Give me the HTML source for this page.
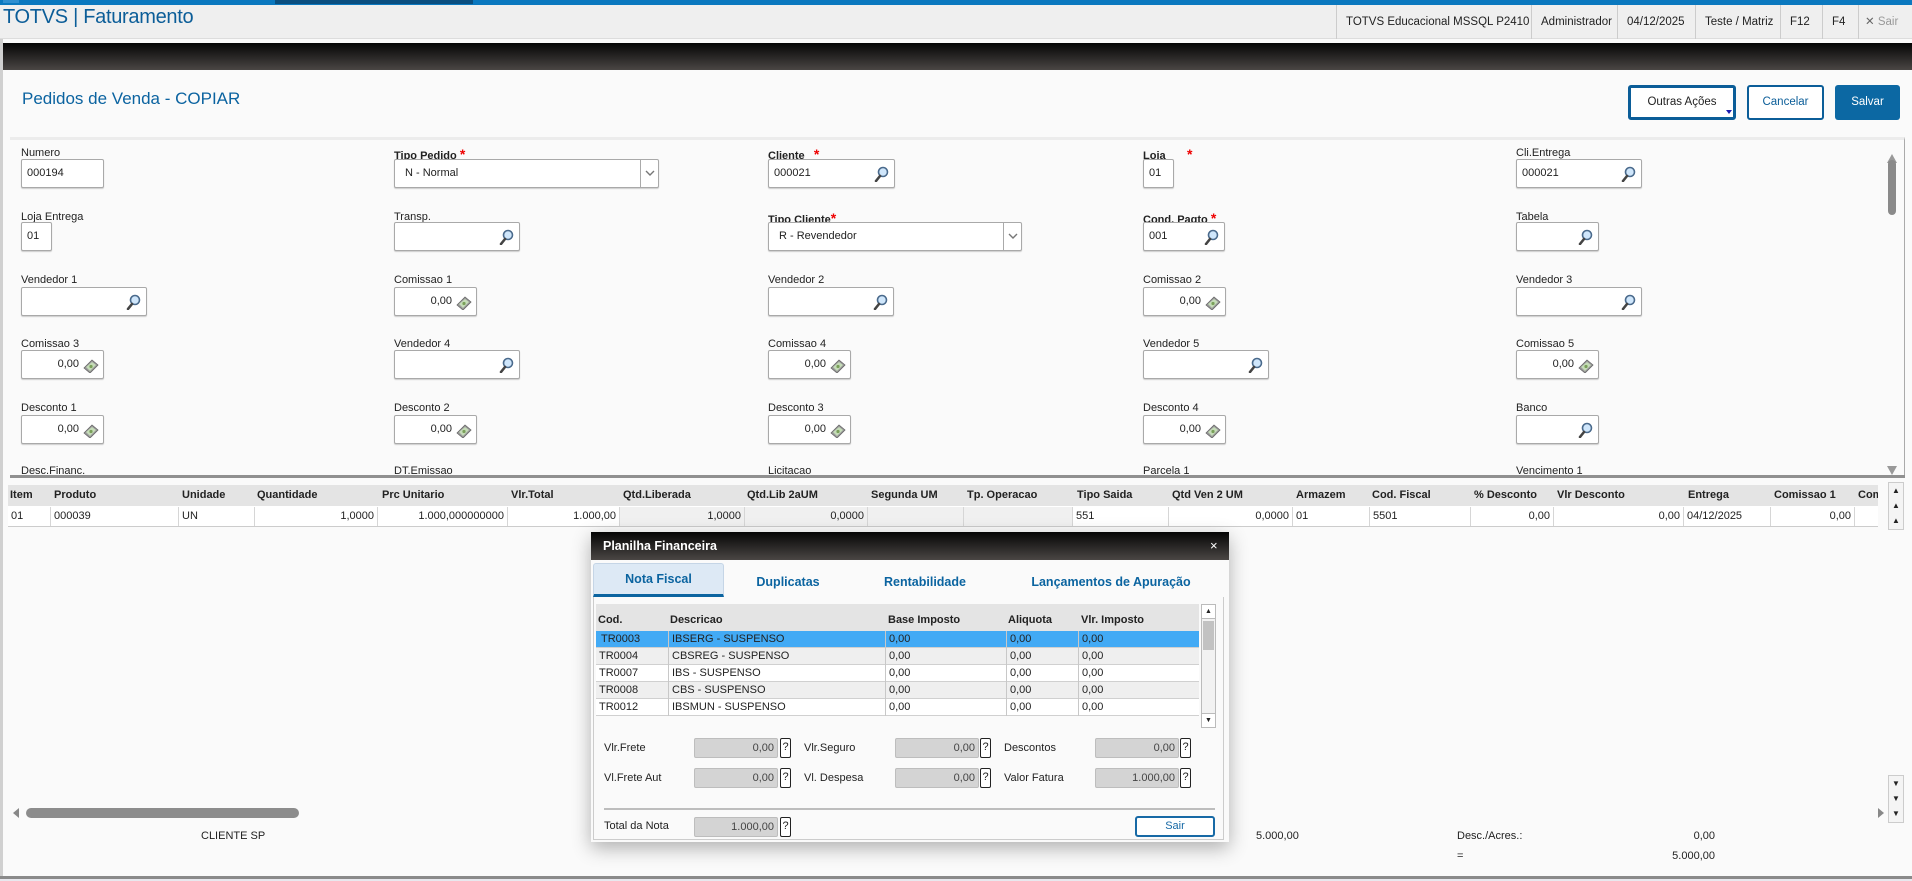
<!DOCTYPE html>
<html><head><meta charset="utf-8">
<style>
*{box-sizing:border-box;margin:0;padding:0}
body{width:1912px;height:881px;overflow:hidden;background:#fafafa;font-family:"Liberation Sans",Arial,sans-serif;color:#222;position:relative}
.a{position:absolute}
.lbl{position:absolute;font-size:11px;color:#222;white-space:nowrap}
.lbl b{font-weight:bold}
.req{color:#e00;font-weight:bold;font-size:14px}
.inp{position:absolute;height:29px;border:1px solid #a9a9a9;border-radius:2px;background:#fff;font-size:11px;line-height:27px;padding-left:5px;box-shadow:0 1px 1px #ccc}
.inp.r{text-align:right;padding-right:24px}
.ic{position:absolute;right:4px;top:6px}
.hd{position:absolute;top:0;height:34px;line-height:34px;font-size:11.5px;color:#222;border-left:1px solid #ccc;padding:0 9px;white-space:nowrap}
.gh{position:absolute;top:485px;height:21px;line-height:21px;font-size:11px;font-weight:bold;white-space:nowrap}
.gc{position:absolute;top:507px;height:19px;line-height:19px;font-size:11px;border-right:1px solid #d6d6d6;padding:0 3px;white-space:nowrap;overflow:hidden}
.dr{position:absolute;left:596px;width:603px;height:17px;font-size:11px;line-height:17px;border-bottom:1px solid #d0d0d0}
.dr span{position:absolute;top:0;padding-left:3px;border-left:1px solid #c8c8c8;height:17px}
.fl{position:absolute;font-size:11px;color:#222}
.fi{position:absolute;width:84px;height:20px;background:#d4d4d4;border:1px solid #bdbdbd;border-radius:2px;font-size:11px;line-height:18px;text-align:right;padding-right:3px;color:#444}
.q{position:absolute;width:11px;height:20px;border:1.5px solid #222;border-radius:2px;font-size:11px;line-height:17px;text-align:center;background:#fff}
.dd{position:absolute;right:0;top:0;width:18px;height:27px;border-left:1px solid #aaa}
</style></head><body>
<div class="a" style="left:0;top:0;width:1912px;height:5px;background:#0a78bf"></div>
<div class="a" style="left:3px;top:0;width:16px;height:3px;background:#2f8fd0"></div>
<div class="a" style="left:275px;top:0;width:198px;height:4px;background:#0a4f80"></div>
<div class="a" style="left:0;top:5px;width:1912px;height:34px;background:#efefef;border-bottom:1px solid #ddd"></div>
<div class="a" style="left:3px;top:6px;font-size:20px;color:#0b5d98;letter-spacing:-0.3px">TOTVS | Faturamento</div>
<div class="a" style="left:0;top:5px;width:1912px;height:34px">
<div class="hd" style="left:1336px">TOTVS Educacional MSSQL P2410</div>
<div class="hd" style="left:1531px">Administrador</div>
<div class="hd" style="left:1617px">04/12/2025</div>
<div class="hd" style="left:1695px">Teste / Matriz</div>
<div class="hd" style="left:1780px">F12</div>
<div class="hd" style="left:1822px">F4</div>
<div class="hd" style="left:1858px;color:#999;padding:0 6px"><span style="color:#666">✕</span> Sair</div>
</div>
<div class="a" style="left:2px;top:43px;width:1910px;height:27px;background:linear-gradient(#050505,#4a4644)"></div>
<div class="a" style="left:0;top:39px;width:3px;height:842px;background:#d0d0d0"></div>
<div class="a" style="left:22px;top:89px;font-size:17px;color:#0b63a0">Pedidos de Venda - COPIAR</div>
<div class="a" style="left:1628px;top:85px;width:108px;height:35px;border:3px solid #0b5d98;border-radius:3px;background:#fff;font-size:11.5px;text-align:center;line-height:29px;color:#222">Outras Ações</div>
<div class="a" style="left:1726px;top:110px;width:0;height:0;border-left:3px solid transparent;border-right:3px solid transparent;border-top:4px solid #1a1ab0"></div>
<div class="a" style="left:1747px;top:85px;width:77px;height:35px;border:2px solid #0b5d98;border-radius:3px;background:#fff;font-size:11.5px;text-align:center;line-height:31px;color:#0b5d98">Cancelar</div>
<div class="a" style="left:1835px;top:85px;width:65px;height:35px;border-radius:3px;background:#0c68a3;font-size:11.5px;text-align:center;line-height:35px;color:#fff">Salvar</div>
<div class="a" style="left:10px;top:137px;width:1895px;height:341px;border-top:3px solid #ececec;border-right:1px solid #aaa;border-bottom:3px solid #909090;overflow:hidden;background:#fafafa">
<div class="a" style="left:1877px;top:14px;width:0;height:0;border-left:5px solid transparent;border-right:5px solid transparent;border-bottom:9px solid #999"></div>
<div class="a" style="left:1878px;top:20px;width:8px;height:55px;border-radius:4px;background:#8a8a8a"></div>
<div class="a" style="left:1877px;top:326px;width:0;height:0;border-left:5px solid transparent;border-right:5px solid transparent;border-top:9px solid #999"></div>
</div>
<svg width="0" height="0" style="position:absolute"><defs>
<g id="mag"><circle cx="9" cy="6" r="4.5" fill="#cfe6fb" stroke="#4a6a8c" stroke-width="1.6"/><line x1="6" y1="10" x2="2" y2="15" stroke="#444" stroke-width="2.6" stroke-linecap="round"/></g>
<g id="mon"><path d="M1 11 L9 3 L15 8 L7 16 Z" fill="#9a9a9a" stroke="#666" stroke-width="0.8"/><path d="M3 10 L9 5 L13 8 L7 14 Z" fill="#c5dcb8"/><circle cx="8" cy="9.5" r="1.6" fill="#7aa05a"/></g>
<g id="chev"><path d="M5 11 L9 15 L13 11" fill="none" stroke="#777" stroke-width="1.4"/></g>
</defs></svg>
<div class="lbl" style="left:21px;top:147px">Numero</div>
<div class="inp" style="left:21px;top:159px;width:83px">000194</div>
<div class="lbl" style="left:394px;top:146px"><b>Tipo Pedido</b> <span class="req">*</span></div>
<div class="inp" style="left:394px;top:159px;width:265px;padding-left:10px">N - Normal<div class="dd"><svg width="18" height="27"><use href="#chev"/></svg></div></div>
<div class="lbl" style="left:768px;top:146px"><b>Cliente</b> &nbsp;&nbsp;<span class="req">*</span></div>
<div class="inp" style="left:768px;top:159px;width:127px">000021<svg class="ic" width="16" height="16"><use href="#mag"/></svg></div>
<div class="lbl" style="left:1143px;top:146px"><b>Loja</b> &nbsp;&nbsp;&nbsp;&nbsp;&nbsp;&nbsp;<span class="req">*</span></div>
<div class="inp" style="left:1143px;top:159px;width:31px">01</div>
<div class="lbl" style="left:1516px;top:147px">Cli.Entrega</div>
<div class="inp" style="left:1516px;top:159px;width:126px">000021<svg class="ic" width="16" height="16"><use href="#mag"/></svg></div>
<div class="lbl" style="left:21px;top:211px">Loja Entrega</div>
<div class="inp" style="left:21px;top:222px;width:31px">01</div>
<div class="lbl" style="left:394px;top:211px">Transp.</div>
<div class="inp" style="left:394px;top:222px;width:126px"><svg class="ic" width="16" height="16"><use href="#mag"/></svg></div>
<div class="lbl" style="left:768px;top:210px"><b>Tipo Cliente</b><span class="req">*</span></div>
<div class="inp" style="left:768px;top:222px;width:254px;padding-left:10px">R - Revendedor<div class="dd"><svg width="18" height="27"><use href="#chev"/></svg></div></div>
<div class="lbl" style="left:1143px;top:210px"><b>Cond. Pagto</b> <span class="req">*</span></div>
<div class="inp" style="left:1143px;top:222px;width:82px">001<svg class="ic" width="16" height="16"><use href="#mag"/></svg></div>
<div class="lbl" style="left:1516px;top:211px">Tabela</div>
<div class="inp" style="left:1516px;top:222px;width:83px"><svg class="ic" width="16" height="16"><use href="#mag"/></svg></div>
<div class="lbl" style="left:21px;top:274px">Vendedor 1</div>
<div class="inp" style="left:21px;top:287px;width:126px"><svg class="ic" width="16" height="16"><use href="#mag"/></svg></div>
<div class="lbl" style="left:394px;top:274px">Comissao 1</div>
<div class="inp r" style="left:394px;top:287px;width:83px">0,00<svg class="ic" width="16" height="16"><use href="#mon"/></svg></div>
<div class="lbl" style="left:768px;top:274px">Vendedor 2</div>
<div class="inp" style="left:768px;top:287px;width:126px"><svg class="ic" width="16" height="16"><use href="#mag"/></svg></div>
<div class="lbl" style="left:1143px;top:274px">Comissao 2</div>
<div class="inp r" style="left:1143px;top:287px;width:83px">0,00<svg class="ic" width="16" height="16"><use href="#mon"/></svg></div>
<div class="lbl" style="left:1516px;top:274px">Vendedor 3</div>
<div class="inp" style="left:1516px;top:287px;width:126px"><svg class="ic" width="16" height="16"><use href="#mag"/></svg></div>
<div class="lbl" style="left:21px;top:338px">Comissao 3</div>
<div class="inp r" style="left:21px;top:350px;width:83px">0,00<svg class="ic" width="16" height="16"><use href="#mon"/></svg></div>
<div class="lbl" style="left:394px;top:338px">Vendedor 4</div>
<div class="inp" style="left:394px;top:350px;width:126px"><svg class="ic" width="16" height="16"><use href="#mag"/></svg></div>
<div class="lbl" style="left:768px;top:338px">Comissao 4</div>
<div class="inp r" style="left:768px;top:350px;width:83px">0,00<svg class="ic" width="16" height="16"><use href="#mon"/></svg></div>
<div class="lbl" style="left:1143px;top:338px">Vendedor 5</div>
<div class="inp" style="left:1143px;top:350px;width:126px"><svg class="ic" width="16" height="16"><use href="#mag"/></svg></div>
<div class="lbl" style="left:1516px;top:338px">Comissao 5</div>
<div class="inp r" style="left:1516px;top:350px;width:83px">0,00<svg class="ic" width="16" height="16"><use href="#mon"/></svg></div>
<div class="lbl" style="left:21px;top:402px">Desconto 1</div>
<div class="inp r" style="left:21px;top:415px;width:83px">0,00<svg class="ic" width="16" height="16"><use href="#mon"/></svg></div>
<div class="lbl" style="left:394px;top:402px">Desconto 2</div>
<div class="inp r" style="left:394px;top:415px;width:83px">0,00<svg class="ic" width="16" height="16"><use href="#mon"/></svg></div>
<div class="lbl" style="left:768px;top:402px">Desconto 3</div>
<div class="inp r" style="left:768px;top:415px;width:83px">0,00<svg class="ic" width="16" height="16"><use href="#mon"/></svg></div>
<div class="lbl" style="left:1143px;top:402px">Desconto 4</div>
<div class="inp r" style="left:1143px;top:415px;width:83px">0,00<svg class="ic" width="16" height="16"><use href="#mon"/></svg></div>
<div class="lbl" style="left:1516px;top:402px">Banco</div>
<div class="inp" style="left:1516px;top:415px;width:83px"><svg class="ic" width="16" height="16"><use href="#mag"/></svg></div>
<div class="a" style="left:0;top:465px;width:1890px;height:10px;overflow:hidden">
<div class="lbl" style="left:21px;top:0">Desc.Financ.</div>
<div class="lbl" style="left:394px;top:0">DT.Emissao</div>
<div class="lbl" style="left:768px;top:0">Licitacao</div>
<div class="lbl" style="left:1143px;top:0">Parcela 1</div>
<div class="lbl" style="left:1516px;top:0">Vencimento 1</div>
</div>
<div class="a" style="left:10px;top:475px;width:1895px;height:3px;background:#909090"></div>
<div class="a" style="left:8px;top:485px;width:1870px;height:21px;background:#e4e4e4"></div>
<div class="gh" style="left:10px">Item</div><div class="gh" style="left:54px">Produto</div><div class="gh" style="left:182px">Unidade</div><div class="gh" style="left:257px">Quantidade</div><div class="gh" style="left:382px">Prc Unitario</div><div class="gh" style="left:511px">Vlr.Total</div><div class="gh" style="left:623px">Qtd.Liberada</div><div class="gh" style="left:747px">Qtd.Lib 2aUM</div><div class="gh" style="left:871px">Segunda UM</div><div class="gh" style="left:967px">Tp. Operacao</div><div class="gh" style="left:1077px">Tipo Saida</div><div class="gh" style="left:1172px">Qtd Ven 2 UM</div><div class="gh" style="left:1296px">Armazem</div><div class="gh" style="left:1372px">Cod. Fiscal</div><div class="gh" style="left:1474px">% Desconto</div><div class="gh" style="left:1557px">Vlr Desconto</div><div class="gh" style="left:1688px">Entrega</div><div class="gh" style="left:1774px">Comissao 1</div><div class="gh" style="left:1858px;width:20px;overflow:hidden">Comissao</div>
<div class="a" style="left:8px;top:506px;width:1870px;height:21px;background:#fff;border-bottom:1px solid #ccc"></div>
<div class="gc" style="left:8px;width:43px">01</div>
<div class="gc" style="left:51px;width:128px">000039</div>
<div class="gc" style="left:179px;width:76px">UN</div>
<div class="gc" style="left:255px;width:123px;text-align:right">1,0000</div>
<div class="gc" style="left:378px;width:130px;text-align:right">1.000,000000000</div>
<div class="gc" style="left:508px;width:112px;text-align:right">1.000,00</div>
<div class="gc" style="left:620px;width:125px;text-align:right;background:#f0f0f0">1,0000</div>
<div class="gc" style="left:745px;width:123px;text-align:right;background:#f0f0f0">0,0000</div>
<div class="gc" style="left:868px;width:96px;background:#f0f0f0"></div>
<div class="gc" style="left:964px;width:109px;background:#f0f0f0"></div>
<div class="gc" style="left:1073px;width:96px">551</div>
<div class="gc" style="left:1169px;width:124px;text-align:right">0,0000</div>
<div class="gc" style="left:1293px;width:77px">01</div>
<div class="gc" style="left:1370px;width:101px">5501</div>
<div class="gc" style="left:1471px;width:83px;text-align:right">0,00</div>
<div class="gc" style="left:1554px;width:130px;text-align:right">0,00</div>
<div class="gc" style="left:1684px;width:87px">04/12/2025</div>
<div class="gc" style="left:1771px;width:84px;text-align:right">0,00</div>
<div class="a" style="left:1888px;top:482px;width:16px;height:48px;border:1px solid #ccc;background:#f4f4f4;font-size:8px;text-align:center;line-height:15px">&#9650;<br>&#9650;<br>&#9650;</div>
<div class="a" style="left:1888px;top:775px;width:16px;height:48px;border:1px solid #ccc;background:#f4f4f4;font-size:8px;text-align:center;line-height:15px">&#9660;<br>&#9660;<br>&#9660;</div>
<div class="a" style="left:13px;top:808px;width:0;height:0;border-top:5px solid transparent;border-bottom:5px solid transparent;border-right:6px solid #888"></div>
<div class="a" style="left:26px;top:808px;width:273px;height:10px;border-radius:5px;background:#8c8c8c"></div>
<div class="a" style="left:1878px;top:808px;width:0;height:0;border-top:5px solid transparent;border-bottom:5px solid transparent;border-left:6px solid #888"></div>
<div class="lbl" style="left:201px;top:830px">CLIENTE SP</div>
<div class="lbl" style="left:1256px;top:830px">5.000,00</div>
<div class="lbl" style="left:1457px;top:830px">Desc./Acres.:</div>
<div class="lbl" style="left:1675px;top:830px;width:40px;text-align:right">0,00</div>
<div class="lbl" style="left:1457px;top:850px">=</div>
<div class="lbl" style="left:1655px;top:850px;width:60px;text-align:right">5.000,00</div>
<div class="a" style="left:0;top:876px;width:1912px;height:3px;background:#8a8a8a"></div>
<div class="a" style="left:0;top:879px;width:1912px;height:2px;background:#e8e8ee"></div>
<div class="a" style="left:591px;top:532px;width:638px;height:310px;background:#fafafa;box-shadow:0 6px 18px rgba(0,0,0,0.3)">
<div class="a" style="left:0;top:0;width:638px;height:28px;background:linear-gradient(#050505,#4a4644)"></div>
<div class="a" style="left:12px;top:7px;font-size:12.5px;font-weight:bold;color:#fff">Planilha Financeira</div>
<div class="a" style="left:619px;top:6px;font-size:13px;color:#fff">×</div>
<div class="a" style="left:2px;top:31px;width:131px;height:34px;background:#dde9f5;border:1px solid #c5d5e6;border-bottom:3px solid #0b64a0;border-radius:3px 3px 0 0"></div>
<div class="a" style="left:2px;top:40px;width:131px;text-align:center;font-size:12.5px;font-weight:bold;color:#0b64a0">Nota Fiscal</div>
<div class="a" style="left:137px;top:43px;width:120px;text-align:center;font-size:12.5px;font-weight:bold;color:#0b64a0">Duplicatas</div>
<div class="a" style="left:274px;top:43px;width:120px;text-align:center;font-size:12.5px;font-weight:bold;color:#0b64a0">Rentabilidade</div>
<div class="a" style="left:420px;top:43px;width:200px;text-align:center;font-size:12.5px;font-weight:bold;color:#0b64a0">Lançamentos de Apuração</div>
<div class="a" style="left:2px;top:65px;width:631px;height:243px;border:1px solid #ccc;border-top:none"></div>
</div>
<div class="a" style="left:596px;top:604px;width:603px;height:27px;background:#e4e4e4"></div>
<div class="a" style="left:598px;top:614px;font-size:11px;font-weight:bold">Cod.</div>
<div class="a" style="left:670px;top:614px;font-size:11px;font-weight:bold">Descricao</div>
<div class="a" style="left:888px;top:614px;font-size:11px;font-weight:bold">Base Imposto</div>
<div class="a" style="left:1008px;top:614px;font-size:11px;font-weight:bold">Aliquota</div>
<div class="a" style="left:1081px;top:614px;font-size:11px;font-weight:bold">Vlr. Imposto</div>
<div class="dr" style="top:631px;background:#42aaf5"><span style="left:0;border:none;padding-left:5px">TR0003</span><span style="left:72px">IBSERG - SUSPENSO</span><span style="left:289px">0,00</span><span style="left:410px">0,00</span><span style="left:482px">0,00</span></div>
<div class="dr" style="top:648px;background:#efefef"><span style="left:0;border:none">TR0004</span><span style="left:72px">CBSREG - SUSPENSO</span><span style="left:289px">0,00</span><span style="left:410px">0,00</span><span style="left:482px">0,00</span></div>
<div class="dr" style="top:665px;background:#fff"><span style="left:0;border:none">TR0007</span><span style="left:72px">IBS - SUSPENSO</span><span style="left:289px">0,00</span><span style="left:410px">0,00</span><span style="left:482px">0,00</span></div>
<div class="dr" style="top:682px;background:#efefef"><span style="left:0;border:none">TR0008</span><span style="left:72px">CBS - SUSPENSO</span><span style="left:289px">0,00</span><span style="left:410px">0,00</span><span style="left:482px">0,00</span></div>
<div class="dr" style="top:699px;background:#fff"><span style="left:0;border:none">TR0012</span><span style="left:72px">IBSMUN - SUSPENSO</span><span style="left:289px">0,00</span><span style="left:410px">0,00</span><span style="left:482px">0,00</span></div>
<div class="a" style="left:1201px;top:604px;width:15px;height:124px;border:1px solid #bbb;background:#f2f2f2"></div>
<div class="a" style="left:1201px;top:604px;width:15px;height:15px;border:1px solid #bbb;background:#fff;font-size:7px;text-align:center;line-height:13px">&#9650;</div>
<div class="a" style="left:1203px;top:621px;width:11px;height:29px;background:#c2c2c2"></div>
<div class="a" style="left:1201px;top:713px;width:15px;height:15px;border:1px solid #bbb;background:#fff;font-size:7px;text-align:center;line-height:13px">&#9660;</div>
<div class="fl" style="left:604px;top:742px">Vlr.Frete</div><div class="fi" style="left:694px;top:738px">0,00</div><div class="q" style="left:780px;top:738px">?</div>
<div class="fl" style="left:804px;top:742px">Vlr.Seguro</div><div class="fi" style="left:895px;top:738px">0,00</div><div class="q" style="left:980px;top:738px">?</div>
<div class="fl" style="left:1004px;top:742px">Descontos</div><div class="fi" style="left:1095px;top:738px">0,00</div><div class="q" style="left:1180px;top:738px">?</div>
<div class="fl" style="left:604px;top:772px">Vl.Frete Aut</div><div class="fi" style="left:694px;top:768px">0,00</div><div class="q" style="left:780px;top:768px">?</div>
<div class="fl" style="left:804px;top:772px">Vl. Despesa</div><div class="fi" style="left:895px;top:768px">0,00</div><div class="q" style="left:980px;top:768px">?</div>
<div class="fl" style="left:1004px;top:772px">Valor Fatura</div><div class="fi" style="left:1095px;top:768px">1.000,00</div><div class="q" style="left:1180px;top:768px">?</div>
<div class="a" style="left:604px;top:808px;width:611px;height:2px;background:#bdbdbd"></div>
<div class="fl" style="left:604px;top:820px">Total da Nota</div><div class="fi" style="left:694px;top:817px">1.000,00</div><div class="q" style="left:780px;top:817px">?</div>
<div class="a" style="left:1135px;top:816px;width:80px;height:21px;border:2px solid #1769a5;border-radius:3px;background:#fff;font-size:11px;color:#1769a5;text-align:center;line-height:17px">Sair</div>
</body></html>
